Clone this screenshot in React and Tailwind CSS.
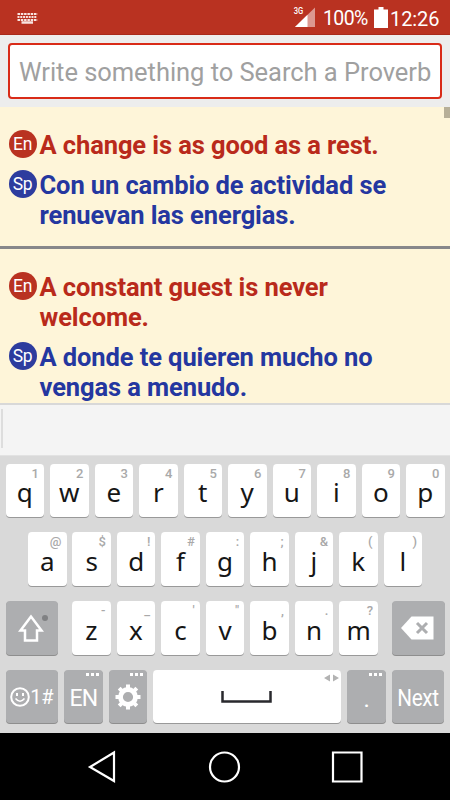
import React from "react";

const PROVERBS = [
  {
    id: 1,
    en: ["A change is as good as a rest."],
    sp: ["Con un cambio de actividad se", "renuevan las energias."],
  },
  {
    id: 2,
    en: ["A constant guest is never", "welcome."],
    sp: ["A donde te quieren mucho no", "vengas a menudo."],
  },
];

const TOP_ROW = [
  ["q", "1"], ["w", "2"], ["e", "3"], ["r", "4"], ["t", "5"],
  ["y", "6"], ["u", "7"], ["i", "8"], ["o", "9"], ["p", "0"],
];

const HOME_ROW = [
  ["a", "@"], ["s", "$"], ["d", "!"], ["f", "#"], ["g", ":"],
  ["h", ";"], ["j", "&"], ["k", "("], ["l", ")"],
];

const BOTTOM_ROW = [
  ["z", "-"], ["x", "_"], ["c", "'"], ["v", "\""],
  ["b", ","], ["n", "."], ["m", "?"],
];

function StatusBar() {
  return (
    <div className="flex h-[35px] items-center border-b border-[#a82a1b] bg-[#b93221] text-white">
      <svg className="ml-[17px] mt-px h-[12px] w-[21px]" viewBox="0 0 21 12" fill="none" stroke="#f8e4e1">
        <path d="M.5 2H20.500" strokeWidth="2" strokeDasharray="2.5 .8" />
        <path d="M.5 5H20" strokeWidth="2" strokeDasharray="2 .8" />
        <path d="M.5 8H20.500" strokeWidth="2" strokeDasharray="2.500 .8" />
        <path d="M4.500 10.500H16" strokeWidth="2.500" />
      </svg>
      <svg className="ml-auto h-[22px] w-[24px]" viewBox="0 0 24 22">
        <path d="M23 1.500V21H3Z" fill="#dc9890" />
        <path d="M15.500 8.800V21H3Z" fill="#fff" />
        <text x="1.800" y="8" fontFamily="Roboto, sans-serif" fontSize="8.500" fontWeight="500" fill="#fff" textLength="9.500" lengthAdjust="spacingAndGlyphs">3G</text>
      </svg>
      <span className="ml-[7px] mt-[3px] w-[44px] whitespace-nowrap text-[19.500px] leading-none tracking-[-0.6px]">100%</span>
      <svg className="ml-[7px] h-[21px] w-[14px]" viewBox="0 0 14 21" fill="#fff">
        <path d="M4.500 0h5v2.500H14V21H0V2.500H4.500Z" />
      </svg>
      <span className="ml-[2px] mr-[10px] mt-[3px] w-[50px] whitespace-nowrap text-[20px] leading-none tracking-[-0.1px]">12:26</span>
    </div>
  );
}

function ProverbLine({ lang, lines }) {
  const isEnglish = lang === "En";
  return (
    <div className={`flex ${isEnglish ? "text-[#b92a1b]" : "text-[#2437a0]"}`}>
      <span
        className={`mr-[3px] grid h-7 w-7 shrink-0 place-items-center rounded-full pt-px text-[17.500px] tracking-[-0.3px] text-white ${
          isEnglish ? "bg-[#b93221]" : "bg-[#2d3c9e]"
        }`}
      >
        {lang}
      </span>
      <div className="text-[25.500px] font-bold leading-[30px] tracking-[-0.1px]">
        {lines.map((line) => (
          <div key={line} className="whitespace-nowrap">{line}</div>
        ))}
      </div>
    </div>
  );
}

function Key({ letter, hint }) {
  return (
    <div className="relative grid h-full w-[38.500px] place-items-center rounded-[4px] bg-white shadow-[0_1px_0_#999]">
      <span className="absolute right-[5px] top-[3px] text-[13px] font-medium leading-[14px] text-[#a9a9a9]">{hint}</span>
      <span className="pt-[3px] font-['Noto_Sans',sans-serif] text-[26px] leading-none text-[#161616]">{letter}</span>
    </div>
  );
}

function GreyKey({ className, more, children }) {
  return (
    <div className={`relative grid h-full place-items-center rounded-[4px] bg-[#adaeb0] text-white shadow-[0_1px_0_#8e8e8e] ${className}`}>
      {more ? (
        <span className="absolute right-1 top-[3px] flex gap-[2px]">
          <i className="size-[3px] bg-white" />
          <i className="size-[3px] bg-white" />
          <i className="size-[3px] bg-white" />
        </span>
      ) : null}
      {children}
    </div>
  );
}

function Keyboard() {
  return (
    <div className="h-[278px] border-t border-[#e2e2e2] bg-[#d9d9d9] px-[5.500px] pt-[8px]">
      <div className="flex h-[53px] justify-between">
        {TOP_ROW.map(([letter, hint]) => (
          <Key key={letter} letter={letter} hint={hint} />
        ))}
      </div>
      <div className="mt-[15px] flex h-[54px] justify-between px-[22.500px]">
        {HOME_ROW.map(([letter, hint]) => (
          <Key key={letter} letter={letter} hint={hint} />
        ))}
      </div>
      <div className="mt-[15px] flex h-[54px] justify-between">
        <GreyKey className="w-[52.500px]">
          <svg className="mr-0.5 h-[28px] w-[26px]" viewBox="0 0 26 28" fill="none" stroke="#fff" strokeWidth="2.500">
            <path d="M13 2.500 2.500 16.500H7V26.500H19V16.500H23.500Z" />
          </svg>
          <span className="absolute right-[10px] top-[14px] size-[6px] rounded-full bg-[#808183]" />
        </GreyKey>
        <div className="flex w-[306px] justify-between">
          {BOTTOM_ROW.map(([letter, hint]) => (
            <Key key={letter} letter={letter} hint={hint} />
          ))}
        </div>
        <GreyKey className="w-[52.500px]">
          <svg className="mr-0.5 h-[24px] w-[34px]" viewBox="0 0 34 24">
            <path d="M1 12 11.500 0.500H33.500V23.500H11.500Z" fill="#fff" />
            <path d="M17 7 27 17M27 7 17 17" stroke="#adaeb0" strokeWidth="3" />
          </svg>
        </GreyKey>
      </div>
      <div className="mt-[15px] flex h-[53px] justify-between">
        <GreyKey className="w-[52.500px]">
          <div className="flex items-center">
            <svg className="h-[20px] w-[20px]" viewBox="0 0 20 20" fill="none" stroke="#fff" strokeWidth="2">
              <circle cx="10" cy="10" r="8.800" />
              <path d="M5.500 11.500Q10 17 14.500 11.500" strokeWidth="1.500" />
              <path d="M7 6V9M13 6V9" />
            </svg>
            <span className="text-[20px] leading-none tracking-[-0.3px]">1#</span>
          </div>
        </GreyKey>
        <GreyKey className="w-[38.500px]" more>
          <span className="pt-1 text-[23px] leading-none tracking-[-1px]">EN</span>
        </GreyKey>
        <GreyKey className="w-[38.500px]" more>
          <svg className="h-[26px] w-[26px]" viewBox="-13 -13 26 26" fill="none" stroke="#fff">
            <circle r="7.500" strokeWidth="4.800" />
            <path d="M0-8V-12.500M0 8V12.500M-8 0H-12.500M8 0H12.500M-5.700-5.700-8.800-8.800M5.700-5.700 8.800-8.800M-5.700 5.700-8.800 8.800M5.700 5.700 8.800 8.800" strokeWidth="4" />
          </svg>
        </GreyKey>
        <div className="relative grid h-full w-[188px] place-items-center rounded-[4px] bg-white shadow-[0_1px_0_#999]">
          <svg className="absolute right-[2px] top-[4px] h-[8px] w-[15px]" viewBox="0 0 15 8" fill="#b3b3b3">
            <path d="M6 .5V7.500L0 4ZM9 .5V7.500L15 4Z" />
          </svg>
          <svg className="mr-[2px] h-[12px] w-[51px]" viewBox="0 0 51 12" fill="none" stroke="#29292d">
            <path d="M1.500 0V10.500H49.500V0" strokeWidth="2.500" />
          </svg>
        </div>
        <GreyKey className="w-[38.500px]" more>
          <span className="pt-1 text-[24px] leading-none">.</span>
        </GreyKey>
        <GreyKey className="w-[52.500px]">
          <span className="inline-block scale-x-90 pt-1 text-[23px] leading-none tracking-[-0.4px]">Next</span>
        </GreyKey>
      </div>
    </div>
  );
}

function NavBar() {
  return (
    <div className="flex h-[67px] items-center justify-between bg-black pl-[87px] pr-[86px]">
      <svg className="h-[34px] w-[30px]" viewBox="0 0 30 34" fill="none" stroke="#fff" strokeWidth="2.200">
        <path d="M27 2.500V31L3 17Z" />
      </svg>
      <svg className="h-[34px] w-[34px]" viewBox="0 0 34 34" fill="none" stroke="#fff" strokeWidth="2.200">
        <circle cx="17.500" cy="17" r="14.500" />
      </svg>
      <svg className="h-[34px] w-[34px]" viewBox="0 0 34 34" fill="none" stroke="#fff" strokeWidth="2.200">
        <path d="M3 2.500H31.500V31.500H3Z" />
      </svg>
    </div>
  );
}

export default function App() {
  return (
    <div className="flex h-[800px] w-[450px] flex-col overflow-hidden bg-[#ededed] font-[Roboto,sans-serif]">
      <StatusBar />
      <div className="h-[72px] px-2 pt-2">
        <div className="flex h-[56px] items-center whitespace-nowrap rounded-[4px] border-[2.500px] border-[#d92b18] bg-white pl-[9px] pt-0.5 text-[25.500px] tracking-[-0.04px] text-[#a0a0a0]">
          Write something to Search a Proverb
        </div>
      </div>
      <div className="relative h-[296px] overflow-hidden bg-[#fef5d9]">
        <span className="absolute right-0 top-0 h-[11px] w-[6px] bg-[#b7af98]" />
        {PROVERBS.map((proverb) => (
          <div key={proverb.id} className="flex flex-col gap-[10px] border-b-3 border-[#87878a] pb-[16px] pl-[8.500px] pt-[23px]">
            <ProverbLine lang="En" lines={proverb.en} />
            <ProverbLine lang="Sp" lines={proverb.sp} />
          </div>
        ))}
      </div>
      <div className="h-[52px] border-t-2 border-[#d8d8d8] bg-[#f4f4f4] pl-px pt-1">
        <div className="h-[39px] w-[2px] bg-[#dddddd]" />
      </div>
      <Keyboard />
      <NavBar />
    </div>
  );
}
